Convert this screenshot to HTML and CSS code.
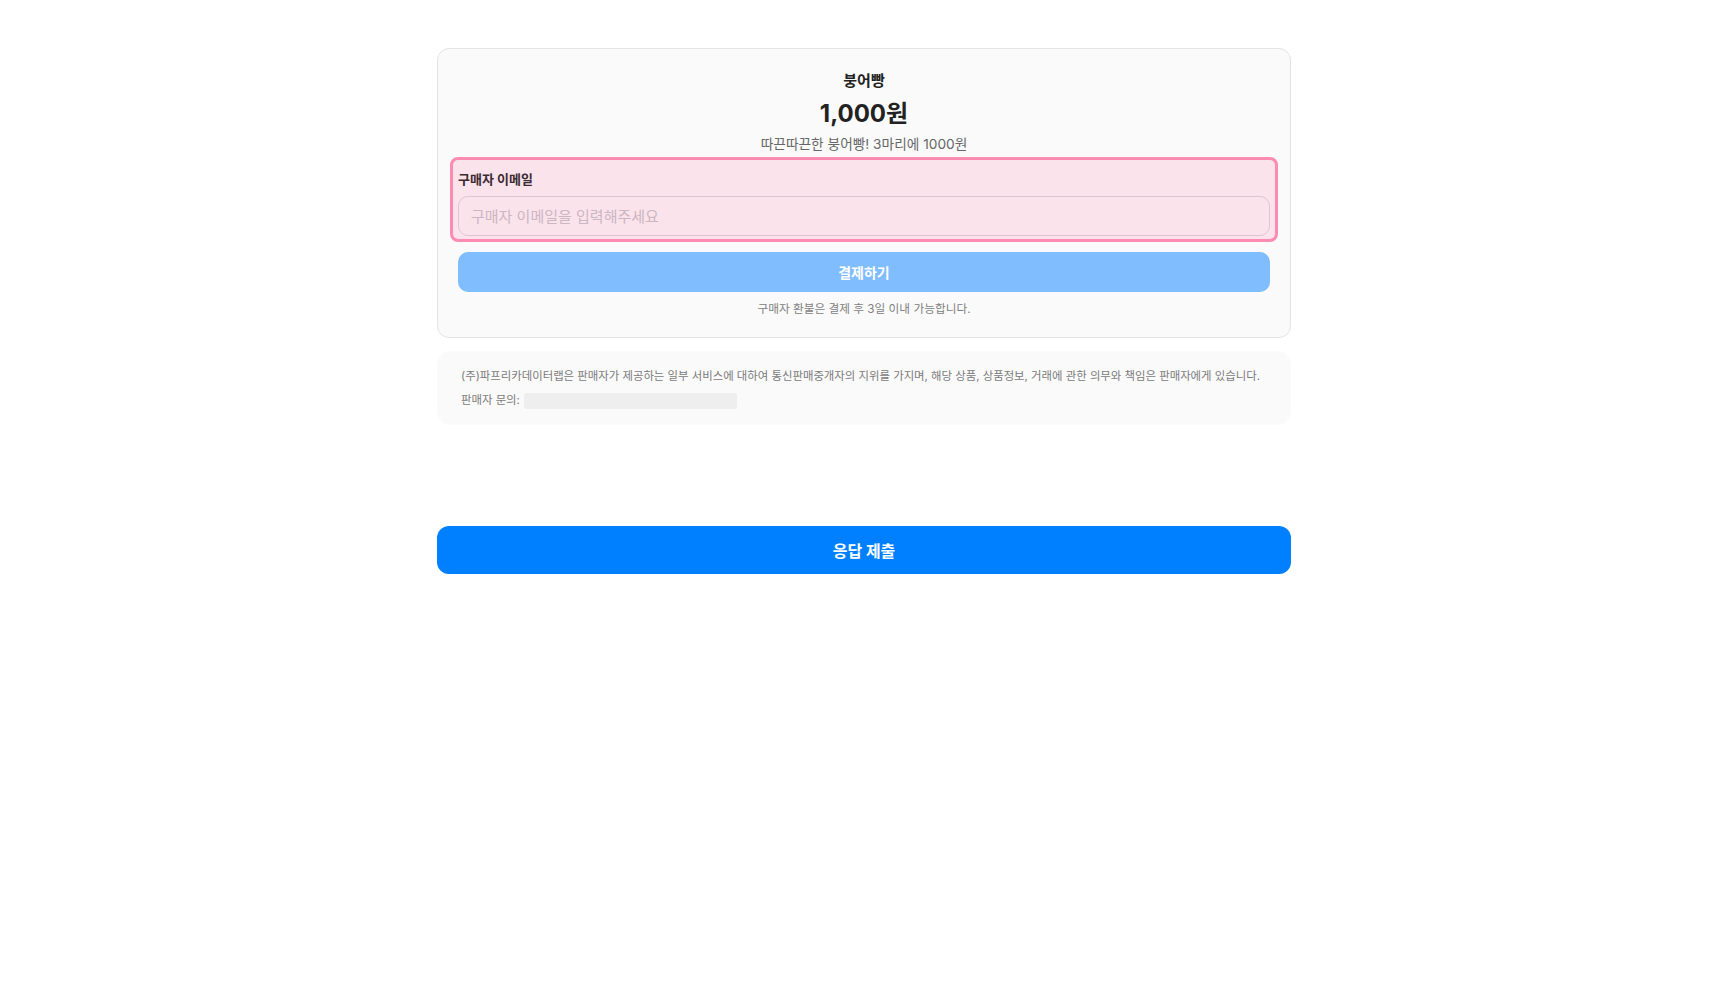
FILE: index.html
```html
<!DOCTYPE html>
<html lang="ko">
<head>
<meta charset="utf-8">
<title>붕어빵 결제</title>
<link rel="stylesheet" href="styles.css">
</head>
<body>
<main class="page">
  <section class="product-card">
    <h2 class="product-name">붕어빵</h2>
    <div class="product-price">1,000원</div>
    <p class="product-desc">따끈따끈한 붕어빵! 3마리에 1000원</p>

    <div class="field field-error">
      <label class="field-label" for="buyer-email">구매자 이메일</label>
      <input class="field-input" id="buyer-email" type="email" placeholder="구매자 이메일을 입력해주세요">
    </div>

    <button class="pay-button" type="button" disabled>결제하기</button>
    <p class="refund-note">구매자 환불은 결제 후 3일 이내 가능합니다.</p>
  </section>

  <section class="seller-info">
    <p class="seller-line">(주)파프리카데이터랩은 판매자가 제공하는 일부 서비스에 대하여 통신판매중개자의 지위를 가지며, 해당 상품, 상품정보, 거래에 관한 의무와 책임은 판매자에게 있습니다.</p>
    <p class="seller-line">판매자 문의: <span class="contact-placeholder"></span></p>
  </section>

  <button class="submit-button" type="button">응답 제출</button>
</main>
</body>
</html>
```

FILE: styles.css
```css
* {
  box-sizing: border-box;
}

html, body {
  margin: 0;
  padding: 0;
  background: #ffffff;
}

body {
  font-family: Inter, "Noto Sans CJK KR", "Noto Sans", sans-serif;
  color: #222222;
}

.page {
  width: 854px;
  margin: 0 auto;
  padding-top: 48px;
  display: flex;
  flex-direction: column;
}

/* product card */
.product-card {
  background: #fafafa;
  border: 1px solid #e4e4e4;
  border-radius: 12px;
  padding: 20px 20px 20px;
  display: flex;
  flex-direction: column;
}

.product-name {
  margin: 0;
  text-align: center;
  font-size: 15px;
  line-height: 24px;
  font-weight: 700;
  color: #222222;
}

.product-price {
  margin-top: 5px;
  text-align: center;
  font-size: 24px;
  line-height: 32px;
  font-weight: 700;
  color: #222222;
}

.product-desc {
  margin: 4px 0 0;
  text-align: center;
  font-size: 13.7px;
  line-height: 20px;
  color: #666666;
}

/* email field, flagged state */
.field {
  display: flex;
  flex-direction: column;
  gap: 7px;
}

.field-error {
  margin: 3px -8px 0;
  padding: 9px 5px 3px;
  border: 3px solid #ff8ab2;
  border-radius: 8px;
  background: #fbe3ec;
}

.field-label {
  font-size: 13px;
  line-height: 20px;
  font-weight: 700;
  color: #3a2b31;
}

.field-input {
  height: 40px;
  width: 100%;
  padding: 0 12px;
  border: 1px solid #e2c3d4;
  border-radius: 10px;
  background: transparent;
  font-family: inherit;
  font-size: 15px;
  color: #222222;
  outline: none;
}

.field-input::placeholder {
  color: #cbb6c1;
}

.pay-button {
  margin-top: 10px;
  height: 40px;
  border: none;
  border-radius: 10px;
  background: #80bdff;
  color: #ffffff;
  font-family: inherit;
  font-size: 14px;
  font-weight: 700;
}

.refund-note {
  margin: 9px 0 0;
  text-align: center;
  font-size: 11.7px;
  line-height: 16px;
  color: #808080;
}

/* seller notice */
.seller-info {
  margin-top: 13px;
  background: #fafafa;
  border-radius: 14px;
  padding: 13px 16px 13px 24px;
}

.seller-line {
  margin: 0;
  font-size: 11.4px;
  line-height: 24px;
  color: #7a7a7a;
  white-space: nowrap;
}

.contact-placeholder {
  display: inline-block;
  width: 213px;
  height: 16px;
  margin-left: 1px;
  vertical-align: middle;
  border-radius: 3px;
  background: #eeeeee;
}

/* form submit */
.submit-button {
  margin-top: 101px;
  height: 48px;
  border: none;
  border-radius: 12px;
  background: #0080ff;
  color: #ffffff;
  font-family: inherit;
  font-size: 16px;
  font-weight: 700;
}
```
